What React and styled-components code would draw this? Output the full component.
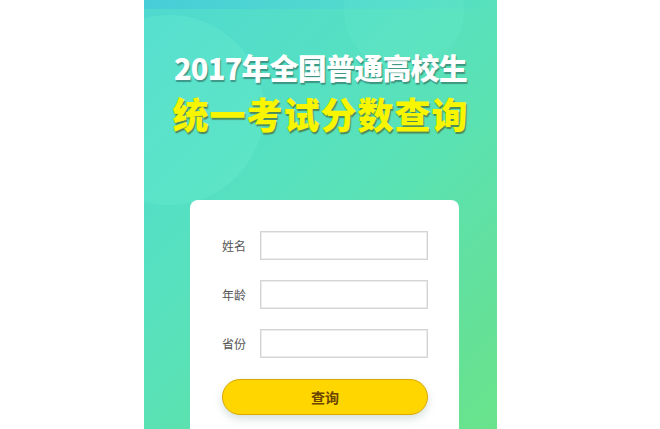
import React from 'react'
import styled, { createGlobalStyle } from 'styled-components'

const GlobalStyle = createGlobalStyle`
  html, body {
    margin: 0;
    padding: 0;
    background: #ffffff;
    font-family: "Noto Sans CJK SC", "Liberation Sans", sans-serif;
  }
`

const Page = styled.div`
  width: 660px;
  height: 429px;
  overflow: hidden;
  padding-left: 144px;
  box-sizing: border-box;
`

const Screen = styled.div`
  position: relative;
  width: 353px;
  height: 429px;
  overflow: hidden;
  display: flex;
  flex-direction: column;
  align-items: center;
  background: linear-gradient(135deg, #4fd9d0 0%, #55e0c4 30%, #5ae2b4 55%, #63e09c 80%, #69e38a 100%);
`

// soft decorative circles behind the heading
const Bubble = styled.div`
  position: absolute;
  border-radius: 50%;
  background: ${p => p.$color};
  left: ${p => p.$x}px;
  top: ${p => p.$y}px;
  width: ${p => p.$size}px;
  height: ${p => p.$size}px;
`

const TopBand = styled.div`
  position: absolute;
  left: 0;
  top: 0;
  width: 100%;
  height: 9px;
  background: linear-gradient(90deg, #46cdd8, #50d8cf 50%, rgba(85,220,203,0));
`

const Heading = styled.div`
  position: relative;
  margin-top: 51px;
  display: flex;
  flex-direction: column;
  align-items: center;
  gap: 9px;
  font-family: "Noto Sans CJK SC", sans-serif;
  font-weight: 900;
`

const Line = styled.div`
  font-size: ${p => p.$size}px;
  line-height: ${p => p.$size + 4}px;
  color: ${p => p.$color};
  letter-spacing: ${p => p.$track}px;
  text-shadow: ${p => p.$shadow};
  white-space: nowrap;
`

const Card = styled.div`
  position: relative;
  margin-top: 67px;
  margin-left: 8px;
  width: 269px;
  flex: 1;
  background: #ffffff;
  border-radius: 8px 8px 0 0;
  padding: 31px 31px 0 32px;
  box-sizing: border-box;
  display: flex;
  flex-direction: column;
  gap: 20px;
`

const Row = styled.div`
  display: flex;
  align-items: center;
  gap: 8px;
`

const Label = styled.span`
  width: 30px;
  font-size: 12px;
  color: #555;
  text-align: left;
`

const Field = styled.input`
  width: 168px;
  height: 29px;
  box-sizing: border-box;
  border: 1px solid #d4d4d4;
  box-shadow: inset 0 0 0 1px #ececec;
  outline: none;
  background: #fff;
`

const Button = styled.button`
  margin-top: 1px;
  width: 206px;
  height: 36px;
  border-radius: 18px;
  border: 1px solid #d9a800;
  background: #ffd600;
  color: #6a4400;
  font-family: "Noto Sans CJK SC", sans-serif;
  font-size: 14px;
  font-weight: 700;
  box-shadow: 0 4px 8px rgba(120, 160, 140, 0.3);
`

const fields = ['姓名', '年龄', '省份']

export default function App() {
  return (
    <Page>
      <GlobalStyle />
      <Screen>
        <TopBand />
        <Bubble $color="rgba(110, 240, 210, 0.3)" $x={-70} $y={15} $size={190} />
        <Bubble $color="rgba(120, 240, 215, 0.15)" $x={200} $y={-50} $size={120} />
        <Heading>
          <Line $size={29} $track={-0.8} $color="#ffffff" $shadow="1px 2px 1px rgba(40,90,80,0.55)">
            2017年全国普通高校生
          </Line>
          <Line $size={36} $track={1} $color="#f8f500" $shadow="1px 2px 1px rgba(70,80,20,0.6)">
            统一考试分数查询
          </Line>
        </Heading>
        <Card>
          {fields.map(f => (
            <Row key={f}>
              <Label>{f}</Label>
              <Field />
            </Row>
          ))}
          <Button>查询</Button>
        </Card>
      </Screen>
    </Page>
  )
}
